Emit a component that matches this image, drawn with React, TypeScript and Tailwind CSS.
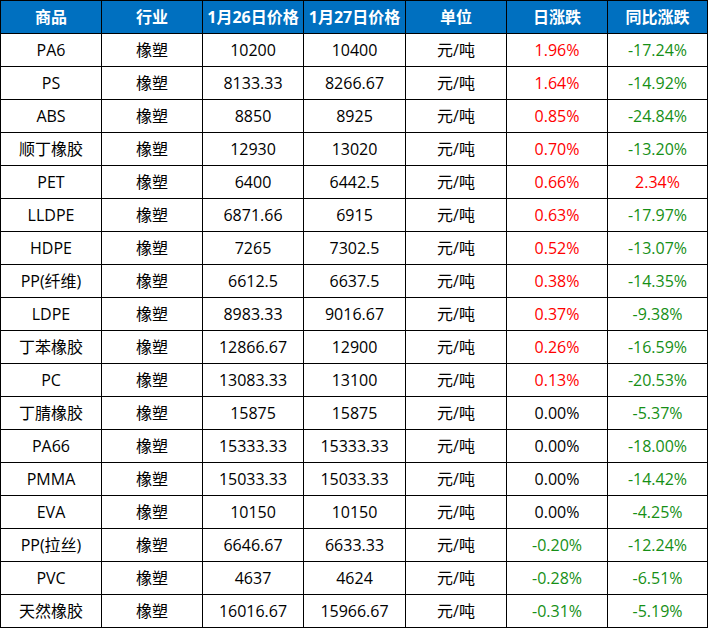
import React from 'react';

type Row = [string, string, string, string, string, string];

const rows: Row[] = [
  ['PA6', '10200', '10400', '1.96%', '-17.24%', 'r'],
  ['PS', '8133.33', '8266.67', '1.64%', '-14.92%', 'r'],
  ['ABS', '8850', '8925', '0.85%', '-24.84%', 'r'],
  ['顺丁橡胶', '12930', '13020', '0.70%', '-13.20%', 'r'],
  ['PET', '6400', '6442.5', '0.66%', '2.34%', 'rr'],
  ['LLDPE', '6871.66', '6915', '0.63%', '-17.97%', 'r'],
  ['HDPE', '7265', '7302.5', '0.52%', '-13.07%', 'r'],
  ['PP(纤维)', '6612.5', '6637.5', '0.38%', '-14.35%', 'r'],
  ['LDPE', '8983.33', '9016.67', '0.37%', '-9.38%', 'r'],
  ['丁苯橡胶', '12866.67', '12900', '0.26%', '-16.59%', 'r'],
  ['PC', '13083.33', '13100', '0.13%', '-20.53%', 'r'],
  ['丁腈橡胶', '15875', '15875', '0.00%', '-5.37%', 'k'],
  ['PA66', '15333.33', '15333.33', '0.00%', '-18.00%', 'k'],
  ['PMMA', '15033.33', '15033.33', '0.00%', '-14.42%', 'k'],
  ['EVA', '10150', '10150', '0.00%', '-4.25%', 'k'],
  ['PP(拉丝)', '6646.67', '6633.33', '-0.20%', '-12.24%', 'g'],
  ['PVC', '4637', '4624', '-0.28%', '-6.51%', 'g'],
  ['天然橡胶', '16016.67', '15966.67', '-0.31%', '-5.19%', 'g'],
];

const widths = ['w-[101px]', 'w-[101px]', 'w-[101px]', 'w-[102px]', 'w-[101px]', 'w-[101px]', 'w-[100px]'];
const headers = ['商品', '行业', '1月26日价格', '1月27日价格', '单位', '日涨跌', '同比涨跌'];

const cell = 'h-[33px] flex items-center justify-center border-r border-b border-black shrink-0';

export default function App() {
  return (
    <div
      className="w-[708px] bg-white border-l border-t border-black"
      style={{ fontFamily: '"Open Sans", "Noto Sans CJK SC", sans-serif' }}
    >
      <div className="flex bg-[#0070c0] text-white font-bold text-[16px]">
        {headers.map((h, i) => (
          <div key={h} className={`${cell} ${widths[i]}`}>
            {h}
          </div>
        ))}
      </div>
      {rows.map((r) => {
        const day = r[5] === 'r' || r[5] === 'rr' ? 'text-[#ff0000]' : r[5] === 'g' ? 'text-[#168f16]' : 'text-black';
        const yoy = r[5] === 'rr' ? 'text-[#ff0000]' : 'text-[#168f16]';
        return (
          <div key={r[0]} className="flex text-[16px] text-black">
            <div className={`${cell} ${widths[0]}`}>{r[0]}</div>
            <div className={`${cell} ${widths[1]}`}>橡塑</div>
            <div className={`${cell} ${widths[2]}`}>{r[1]}</div>
            <div className={`${cell} ${widths[3]}`}>{r[2]}</div>
            <div className={`${cell} ${widths[4]}`}>元/吨</div>
            <div className={`${cell} ${widths[5]} ${day}`}>{r[3]}</div>
            <div className={`${cell} ${widths[6]} ${yoy}`}>{r[4]}</div>
          </div>
        );
      })}
    </div>
  );
}
